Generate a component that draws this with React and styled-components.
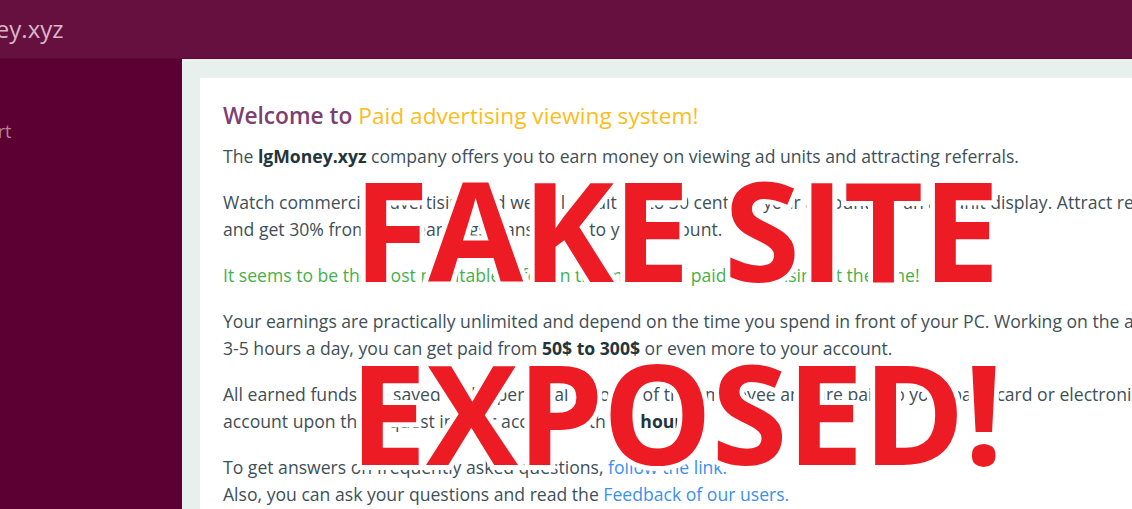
import React from "react";
import styled, { createGlobalStyle } from "styled-components";

const Global = createGlobalStyle`
  html, body { margin: 0; padding: 0; overflow: hidden; }
  body { font-family: "Open Sans", "Noto Sans", sans-serif; background: #e8f0ee; }
`;

const Page = styled.div`
  position: relative;
  width: 1132px;
  height: 509px;
  overflow: hidden;
  display: grid;
  grid-template-rows: 59px 1fr;
`;

const Header = styled.header`
  background: #66103f;
  display: flex;
  align-items: center;
  border-bottom: 1px solid #5a0a36;
`;

const Brand = styled.div`
  color: #d8b6c8;
  font-size: 24px;
  margin-left: -74px;
  margin-top: -1px;
  white-space: nowrap;
`;

const Body = styled.div`
  display: grid;
  grid-template-columns: 182px 1fr;
  min-height: 0;
`;

const Sidebar = styled.nav`
  background: #5c0033;
  padding-top: 60px;
`;

const NavItem = styled.div`
  color: #b3839d;
  font-size: 18px;
  margin-left: ${p => p.$shift}px;
  white-space: nowrap;
  height: 32px;
`;

const Main = styled.main`
  background: #e8f0ee;
  padding: 19px 0 0 18px;
  overflow: hidden;
`;

const Card = styled.section`
  background: #fff;
  width: 1100px;
  height: 600px;
  padding: 22px 0 0 23px;
  box-sizing: border-box;
`;

const Title = styled.h2`
  margin: 0 0 12px;
  font-size: 22.7px;
  font-weight: 600;
  color: #7d4070;
  white-space: nowrap;
`;

const Accent = styled.span`
  color: #fbbd1b;
  font-weight: 400;
`;

const P = styled.p`
  margin: 0 0 19px;
  font-size: 17.6px;
  line-height: 27px;
  color: ${p => (p.$green ? "#47b04b" : "#405058")};
  white-space: nowrap;
`;

const B = styled.b`
  color: #22353d;
`;

const A = styled.a`
  color: #3b8ff0;
  text-decoration: none;
`;

const Overlay = styled.div`
  position: absolute;
  left: 0;
  top: 137px;
  width: 1352px;
  text-align: center;
  font-family: "Open Sans", sans-serif;
  font-weight: 700;
  font-size: 138px;
  line-height: 183px;
  color: #ed1c24;
  letter-spacing: -1px;
  -webkit-text-stroke: 10px #fff;
  paint-order: stroke fill;
  pointer-events: none;
  white-space: nowrap;
`;

export default function App() {
  return (
    <>
      <Global />
      <Page>
        <Header>
          <Brand>lgMoney.xyz</Brand>
        </Header>
        <Body>
          <Sidebar>
            <NavItem $shift={-56}>Support</NavItem>
          </Sidebar>
          <Main>
            <Card>
              <Title>
                Welcome to <Accent>Paid advertising viewing system!</Accent>
              </Title>
              <P>
                The <B>lgMoney.xyz</B> company offers you to earn money on viewing ad units and attracting referrals.
              </P>
              <P>
                Watch commercial advertising and we will credit up to 30 cents to your account for an ad unit display. Attract referrals
                <br />
                and get 30% from their earnings transferred to your account.
              </P>
              <P $green>
                It seems to be the most profitable offer on the market of paid advertising at the time!
              </P>
              <P>
                Your earnings are practically unlimited and depend on the time you spend in front of your PC. Working on the average
                <br />
                3-5 hours a day, you can get paid from <B>50$ to 300$</B> or even more to your account.
              </P>
              <P>
                All earned funds are saved in the personal account of the employee and are paid to your bank card or electronic
                <br />
                account upon the request in your account within <B>1 hour</B>.
              </P>
              <P>
                To get answers on frequently asked questions, <A href="#">follow the link.</A>
                <br />
                Also, you can ask your questions and read the <A href="#">Feedback of our users.</A>
              </P>
            </Card>
          </Main>
        </Body>
        <Overlay>
          FAKE SITE
          <br />
          EXPOSED!
        </Overlay>
      </Page>
    </>
  );
}
